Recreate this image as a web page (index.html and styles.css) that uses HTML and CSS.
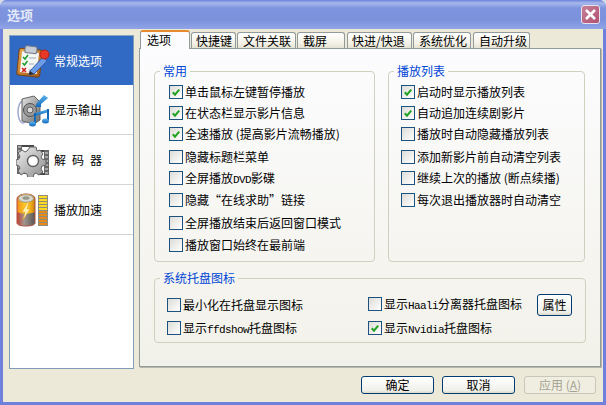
FILE: index.html
```html
<!DOCTYPE html>
<html lang="zh-CN">
<head>
<meta charset="utf-8">
<title>选项</title>
<link rel="stylesheet" href="styles.css">
</head>
<body>
<svg class="defs" width="0" height="0" aria-hidden="true">
  <symbol id="tick" viewBox="0 0 13 13"><path d="M3 6.2 5.4 8.8 10 3.4" fill="none" stroke="#21a121" stroke-width="2.2"/></symbol>
  <linearGradient id="boardG" x1="0" y1="0" x2="1" y2="1"><stop offset="0" stop-color="#e8a850"/><stop offset="1" stop-color="#a85c18"/></linearGradient>
  <linearGradient id="spkG" x1="0" y1="0" x2="1" y2="1"><stop offset="0" stop-color="#e4e4e4"/><stop offset="1" stop-color="#6a6a6a"/></linearGradient>
  <linearGradient id="noteG" x1="0" y1="0" x2="0" y2="1"><stop offset="0" stop-color="#58b4f0"/><stop offset="1" stop-color="#1468b8"/></linearGradient>
  <linearGradient id="gearG" x1="0" y1="0" x2="1" y2="1"><stop offset="0" stop-color="#f0f0f0"/><stop offset="1" stop-color="#8a8a8a"/></linearGradient>
  <linearGradient id="batG" x1="0" y1="0" x2="1" y2="0"><stop offset="0" stop-color="#f09020"/><stop offset=".55" stop-color="#ffd820"/><stop offset="1" stop-color="#d88010"/></linearGradient>
  <linearGradient id="batB" x1="0" y1="0" x2="1" y2="0"><stop offset="0" stop-color="#c04030"/><stop offset=".4" stop-color="#a09890"/><stop offset="1" stop-color="#585450"/></linearGradient>
</svg>
<div class="window">
  <header class="titlebar">
    <span class="title">选项</span>
    <button class="close" type="button" aria-label="关闭">
      <svg width="13" height="13" viewBox="0 0 13 13"><path d="M2 2 11 11M11 2 2 11" stroke="#fff" stroke-width="2.6"/></svg>
    </button>
  </header>
  <div class="client">
    <div class="main">
      <nav class="sidebar">
        <div class="navitem active">
          <svg class="navicon" width="34" height="34" viewBox="0 0 34 34">
            <rect x="2" y="5" width="23" height="27" rx="2.5" fill="url(#boardG)" stroke="#7a4410" transform="rotate(6 13 18)"/>
            <rect x="5" y="8" width="17" height="21" fill="#f4f6f4" transform="rotate(6 13 18)"/>
            <rect x="9" y="2" width="12" height="7" rx="2" fill="#c8ccd4" stroke="#707888" transform="rotate(6 13 5)"/>
            <path d="M7 13l2 2 3-4M6.500 19l2 2 3-4" fill="none" stroke="#20a030" stroke-width="1.600"/>
            <path d="M6 24l4 4M10 24l-4 4" stroke="#d02020" stroke-width="1.600"/>
            <path d="M13 14h7M13 20h5M13 26h3" stroke="#a0a8b8"/>
            <path d="M14 27 27 13l4 4-13 13-5 1z" fill="#6c9ce8" stroke="#3a5aa8"/>
            <circle cx="28.500" cy="10.500" r="4.500" fill="#e83828" stroke="#b02018"/>
            <path d="M13 31l1-4 4 3z" fill="#302820"/>
          </svg>
          <span>常规选项</span>
        </div>
        <div class="navitem">
          <svg class="navicon" width="34" height="34" viewBox="0 0 34 34">
            <ellipse cx="7" cy="19" rx="5" ry="11" fill="none" stroke="#a0a8d0" stroke-width="1.500"/>
            <path d="M6 6l12-3 6 6v18l-6 4-12-3z" fill="url(#spkG)" stroke="#606060"/>
            <circle cx="14" cy="17" r="6.500" fill="#9a9a9a" stroke="#505050"/>
            <circle cx="14" cy="17" r="3" fill="#d8d8d8" stroke="#606060"/>
            <path d="M20 11 28 2l4 3-7 6v3h-5z" fill="url(#noteG)"/>
            <path d="M19 20 33 16v3l-14 4z" fill="url(#noteG)"/>
            <path d="M19 20v11M32 16v11" stroke="#1468b8" stroke-width="2"/>
            <ellipse cx="16.500" cy="31" rx="3.500" ry="2.500" fill="url(#noteG)"/>
            <ellipse cx="29.500" cy="28" rx="3.500" ry="2.500" fill="url(#noteG)"/>
          </svg>
          <span>显示输出</span>
        </div>
        <div class="navitem">
          <svg class="navicon" width="34" height="34" viewBox="0 0 34 34">
            <path d="M1 2h5v29H1zM28 7h5v25h-5z" fill="#686868"/>
            <path d="M2 4h3M2 8h3M2 12h3M2 16h3M2 20h3M2 24h3M2 28h3M29 10h3M29 14h3M29 18h3M29 22h3M29 26h3M29 30h3" stroke="#e8e8e8"/>
            <path d="M6 3h12M6 30h4M22 31h7M24 8h4" stroke="#484848" stroke-width="2"/>
            <path d="M14 4h6l1 4 3-1 3 4-2 3 1 2 4 1v5l-4 1-1 3 2 3-4 3-3-2-2 1-1 4h-5l-1-4-3-1-3 2-3-4 2-3-1-2-3-1v-5l3-1 1-3-2-3 4-3 3 2 2-1z" fill="url(#gearG)" stroke="#606060"/>
            <circle cx="17" cy="18" r="5.500" fill="#fff" stroke="#606060" stroke-width="1.400"/>
          </svg>
          <span class="spaced">解码器</span>
        </div>
        <div class="navitem">
          <svg class="navicon" width="34" height="34" viewBox="0 0 34 34">
            <path d="M1 6c0-3 4-5 9-5s9 2 9 5v24c0 2-4 3-9 3s-9-1-9-3z" fill="url(#batB)" stroke="#b05040"/>
            <path d="M1.500 6c0-3 4-5 8.500-5s8.500 2 8.500 5v13c-3 2-14 2-17 0z" fill="url(#batG)"/>
            <ellipse cx="10" cy="5.500" rx="7.500" ry="3.800" fill="#d8d8d0" stroke="#a09880"/>
            <ellipse cx="10" cy="5" rx="3.500" ry="1.800" fill="#989888"/>
            <path d="M12 9 6 19h3l-2 8 7-11h-3l2-7z" fill="#fff6b0" stroke="#e89020" stroke-width=".5"/>
            <rect x="22" y="2" width="10" height="31" fill="#8c8c80"/>
            <path d="M23 4h8M23 7h8M23 10h8M23 13h8M23 16h8" stroke="#ffd820" stroke-width="2"/>
            <path d="M23 19h8M23 22h8M23 25h8M23 28h8M23 31h8" stroke="#e88a18" stroke-width="2"/>
          </svg>
          <span>播放加速</span>
        </div>
      </nav>
      <div class="tabs">
        <div class="tabstrip">
          <div class="tab current">选项</div>
          <div class="tab w45">快捷键</div>
          <div class="tab w59">文件关联</div>
          <div class="tab w48">截屏</div>
          <div class="tab w65">快进/快退</div>
          <div class="tab w58">系统优化</div>
          <div class="tab w57">自动升级</div>
        </div>
        <div class="page">
          <div class="groups">
            <fieldset class="group left">
              <legend>常用</legend>
              <div class="rows">
                <div class="opt"><span class="cb"><svg width="13" height="13"><use href="#tick"/></svg></span><span>单击鼠标左键暂停播放</span></div>
                <div class="opt"><span class="cb"><svg width="13" height="13"><use href="#tick"/></svg></span><span>在状态栏显示影片信息</span></div>
                <div class="opt"><span class="cb"><svg width="13" height="13"><use href="#tick"/></svg></span><span>全速播放 (提高影片流畅播放)</span></div>
                <div class="opt"><span class="cb"></span><span>隐藏标题栏菜单</span></div>
                <div class="opt"><span class="cb"></span><span>全屏播放<span class="lat">DVD</span>影碟</span></div>
                <div class="opt"><span class="cb"></span><span>隐藏“在线求助”链接</span></div>
                <div class="opt"><span class="cb"></span><span>全屏播放结束后返回窗口模式</span></div>
                <div class="opt"><span class="cb"></span><span>播放窗口始终在最前端</span></div>
              </div>
            </fieldset>
            <fieldset class="group right">
              <legend>播放列表</legend>
              <div class="rows">
                <div class="opt"><span class="cb"><svg width="13" height="13"><use href="#tick"/></svg></span><span>启动时显示播放列表</span></div>
                <div class="opt"><span class="cb"><svg width="13" height="13"><use href="#tick"/></svg></span><span>自动追加连续剧影片</span></div>
                <div class="opt"><span class="cb"></span><span>播放时自动隐藏播放列表</span></div>
                <div class="opt"><span class="cb"></span><span>添加新影片前自动清空列表</span></div>
                <div class="opt"><span class="cb"></span><span>继续上次的播放 (断点续播)</span></div>
                <div class="opt"><span class="cb"></span><span>每次退出播放器时自动清空</span></div>
              </div>
            </fieldset>
          </div>
          <fieldset class="group tray">
            <legend>系统托盘图标</legend>
            <div class="traygrid">
              <div class="opt"><span class="cb"></span><span>最小化在托盘显示图标</span></div>
              <div class="opt"><span class="cb"></span><span>显示<span class="lat">Haali</span>分离器托盘图标</span></div>
              <button class="btn prop" type="button">属性</button>
              <div class="opt"><span class="cb"></span><span>显示<span class="lat">ffdshow</span>托盘图标</span></div>
              <div class="opt"><span class="cb"><svg width="13" height="13"><use href="#tick"/></svg></span><span>显示<span class="lat">Nvidia</span>托盘图标</span></div>
            </div>
          </fieldset>
        </div>
      </div>
    </div>
    <footer class="footer">
      <button class="btn ok" type="button">确定</button>
      <button class="btn cancel" type="button">取消</button>
      <button class="btn apply" type="button">应用 (<u>A</u>)</button>
    </footer>
  </div>
</div>
</body>
</html>
```
FILE: styles.css
```css
* { box-sizing: border-box; }
html, body { margin: 0; padding: 0; background: #d9dce8; }
body {
  width: 606px;
  height: 405px;
  overflow: hidden;
  font: 12px/14px "Noto Sans CJK SC", "Liberation Sans", sans-serif;
  color: #000;
}
.defs { position: absolute; }
.window {
  width: 606px;
  height: 405px;
  display: flex;
  flex-direction: column;
  padding: 0 3px 3px;
  background: #6f7fdc;
  border-radius: 7px 7px 0 0;
}
.titlebar {
  height: 29px;
  margin: 0 -3px;
  padding: 0 6px 0 7px;
  display: flex;
  align-items: center;
  justify-content: space-between;
  border-radius: 7px 7px 0 0;
  background: linear-gradient(#6a82d8 0, #a8b8ec 3px, #7e94de 8px, #7c92dd 20px, #90a4e6 29px);
}
.title { font-size: 13px; font-weight: 700; color: #e4e9f8; }
.close {
  width: 19px;
  height: 19px;
  padding: 0;
  display: flex;
  align-items: center;
  justify-content: center;
  border: 1px solid #e8e4ee;
  border-radius: 3px;
  background: linear-gradient(135deg, #c88098, #b05070);
}
.client {
  flex: 1;
  display: flex;
  flex-direction: column;
  background: #ece9d8;
}
.main { display: flex; height: 338px; padding-left: 6px; }
.sidebar {
  width: 125px;
  height: 334px;
  margin-top: 6px;
  background: #fff;
  border: 1px solid #7f9db9;
  border-top-color: #8aa5c0;
}
.navitem {
  height: 50px;
  display: flex;
  align-items: center;
  gap: 4px;
  padding-left: 6px;
  border-bottom: 1px solid #d4d4d4;
}
.navitem.active { height: 49px; background: #316ac5; color: #fff; border-bottom: 0; }
.navicon { flex: none; }
.spaced { letter-spacing: 6px; }
.tabs { margin-left: 5px; width: 462px; display: flex; flex-direction: column; }
.tabstrip { height: 19px; padding-left: 1px; display: flex; align-items: flex-start; }
.tab {
  height: 16px;
  margin-top: 3px;
  margin-right: 1px;
  padding-left: 5px;
  line-height: 15px;
  border: 1px solid #919b9c;
  border-bottom: 0;
  border-radius: 3px 3px 0 0;
  background: linear-gradient(#fff, #f3f1e6 70%, #e4e1d2);
}
.tab.current {
  position: relative;
  z-index: 1;
  width: 50px;
  height: 19px;
  margin-top: 1px;
  padding-left: 6px;
  line-height: 16px;
  background: #fcfcfe;
  border-top: 2px solid #e68b2c;
}
.w45 { width: 45px; padding-left: 4px; }
.w59 { width: 59px; }
.w48 { width: 48px; margin-right: 2px; }
.w65 { width: 65px; padding-left: 4px; }
.w58 { width: 58px; margin-right: 2px; }
.w57 { width: 57px; }
.page {
  height: 319px;
  padding: 15px 0 0 14px;
  border: 1px solid #919b9c;
  box-shadow: 1px 1px 0 #b8b6a8;
  background: linear-gradient(#fcfcfe, #f2f1e9);
}
.groups { display: flex; gap: 13px; }
.group {
  margin: 0;
  padding: 0;
  min-width: 0;
  border: 1px solid #d0d0bf;
  border-radius: 4px;
}
.group legend {
  margin-left: 5px;
  padding: 0 3px;
  color: #0046d5;
  line-height: 14px;
}
.left { width: 221px; height: 198px; }
.right { width: 197px; height: 198px; }
.rows {
  display: grid;
  grid-template-rows: 21px 21px 23px 21px 22px 23px 22px 14px;
  padding-top: 7px;
}
.left .rows { padding-left: 14px; }
.right .rows { padding-left: 12px; }
.opt { display: flex; align-items: flex-start; gap: 2px; white-space: nowrap; line-height: 13px; }
.cb {
  flex: none;
  width: 14px;
  height: 14px;
  border: 1px solid #1c5180;
  background: linear-gradient(135deg, #dcdcd7, #fff);
  display: flex;
}
.cb svg { display: block; }
.lat { font-family: "Liberation Mono", monospace; font-size: 11px; letter-spacing: -.6px; }
.tray { width: 432px; height: 72px; margin-top: 9px; }
.traygrid {
  display: grid;
  grid-template-columns: 201px 169px 35px;
  grid-template-rows: 24px 24px;
  align-items: center;
  padding: 8px 0 0 12px;
}
.btn {
  font: inherit;
  padding: 0;
  border: 1px solid #003c74;
  border-radius: 3px;
  background: linear-gradient(#fff, #f0f0ea 85%, #dcd8c8);
  color: #000;
}
.prop { width: 35px; height: 22px; }
.footer { display: flex; justify-content: flex-end; padding: 0 7px 0 0; margin-top: 9px; }
.footer .btn { height: 18px; line-height: 14px; }
.ok { width: 73px; }
.cancel { width: 73px; margin-left: 8px; }
.apply {
  width: 72px;
  margin-left: 9px;
  border-color: #c9c7ba !important;
  background: #f0eee1 !important;
  color: #a5a292 !important;
}
```
